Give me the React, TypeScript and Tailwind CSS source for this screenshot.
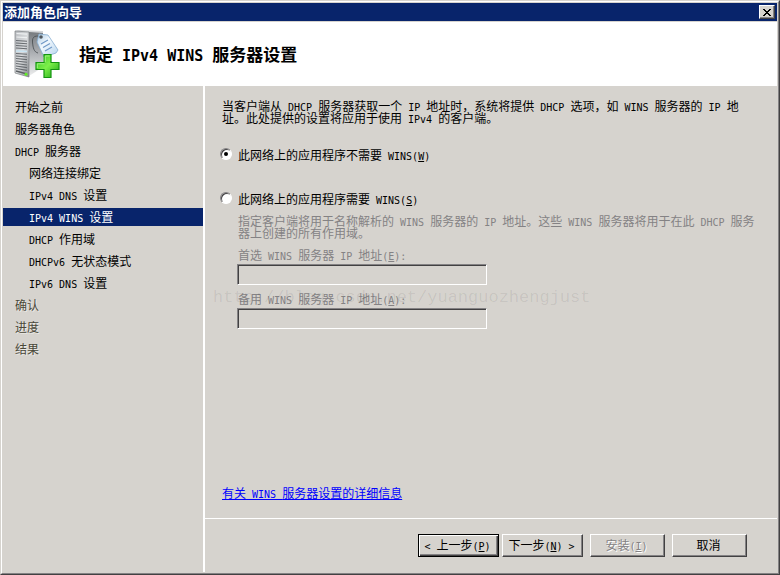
import { useState } from 'react'
import type { ReactNode } from 'react'
import clsx from 'clsx'

interface Step {
  title: string
  sub?: boolean
  disabled?: boolean
}

const STEPS: Step[] = [
  { title: '开始之前' },
  { title: '服务器角色' },
  { title: 'DHCP 服务器' },
  { title: '网络连接绑定', sub: true },
  { title: 'IPv4 DNS 设置', sub: true },
  { title: 'IPv4 WINS 设置', sub: true },
  { title: 'DHCP 作用域', sub: true },
  { title: 'DHCPv6 无状态模式', sub: true },
  { title: 'IPv6 DNS 设置', sub: true },
  { title: '确认', disabled: true },
  { title: '进度', disabled: true },
  { title: '结果', disabled: true },
]

const CURRENT = 5

// Latin runs use a half-width mono face, CJK runs stay full width.
// "&" marks the access key, as in Win32 captions.
function Caption({ text, large }: { text: string; large?: boolean }) {
  const runs = text.match(/[\x20-\x7e]+|[^\x20-\x7e]+/g) ?? []
  return (
    <>
      {runs.map((run, i) => {
        if (!/^[\x20-\x7e]/.test(run)) return run
        const [head, tail] = run.split('&')
        return (
          <span
            key={i}
            className={clsx(
              "font-['DejaVu_Sans_Mono',monospace] leading-[0]",
              large ? 'text-[15px]' : 'text-[10px]'
            )}
          >
            {head}
            {tail && <u className="underline-offset-1">{tail[0]}</u>}
            {tail?.slice(1)}
          </span>
        )
      })}
    </>
  )
}

function ServerIcon() {
  return (
    <svg className="h-[50px] w-[48px] shrink-0" viewBox="0 0 48 50" aria-hidden="true">
      <defs>
        <linearGradient id="front" x1="0" y1="0" x2="1" y2="1">
          <stop offset="0" stopColor="#b9bcc0" />
          <stop offset="0.5" stopColor="#d9dbdd" />
          <stop offset="1" stopColor="#85898d" />
        </linearGradient>
        <linearGradient id="side" x1="0" y1="0" x2="0" y2="1">
          <stop offset="0" stopColor="#74787c" />
          <stop offset="0.5" stopColor="#aeb1b5" />
          <stop offset="1" stopColor="#eceded" />
        </linearGradient>
        <linearGradient id="tag" x1="0" y1="0" x2="1" y2="1">
          <stop offset="0" stopColor="#a9c8e2" />
          <stop offset="0.4" stopColor="#f2f8fd" />
          <stop offset="1" stopColor="#b4d3ee" />
        </linearGradient>
        <linearGradient id="plus" x1="0" y1="0" x2="1" y2="1">
          <stop offset="0" stopColor="#2fbf22" />
          <stop offset="0.5" stopColor="#7df04a" />
          <stop offset="1" stopColor="#18a312" />
        </linearGradient>
      </defs>
      <path d="M15 2 29 3V38L15 47Z" fill="url(#side)" />
      <path d="M1 2 4 1 29 2 29 4 15 3Z" fill="#d4d6d8" />
      <path d="M1 2 15 3V48L1 44Z" fill="url(#front)" stroke="#7b7f83" strokeWidth="0.7" />
      <path d="M2.5 4.5 13 5.2M2.5 8 13 8.7" stroke="#eef0f1" strokeWidth="1.2" />
      <path
        d="M2 11.5 13 12.3M2 14 13 14.8M2 16.5 13 17.3M2 19 13 19.8M2 24.5 13 25.3M2 27 13 28M2 29.5 13 30.6M2 32 13 33.3M2 34.5 13 36M2 37 13 38.6M2 39.5 13 41.4"
        stroke="#686c70"
        strokeWidth="1.1"
      />
      <path d="M2 22 13 22.6" stroke="#c8e4f2" strokeWidth="1.5" />
      <path d="M2 42 13 45" stroke="#5c6064" strokeWidth="1.3" />
      <circle cx="12" cy="45.3" r="1.5" fill="#63ef24" />
      <path d="M28 8C22 6 18 7 18.5 13S20 23 24 24" fill="none" stroke="#4d5256" strokeWidth="0.9" />
      <path d="M25 5 34 6 44 21 42 24 30 28 23 13Z" fill="url(#tag)" stroke="#86add0" strokeWidth="0.8" />
      <circle cx="27" cy="8" r="1.8" fill="#50565c" />
      <path d="M27 15 34 11M29 18.5 36 14.5M31 22 38 18" stroke="#7198c6" strokeWidth="1.2" />
      <path
        d="M30 25.5H37V33.5H45V40.5H37V48.5H30V40.5H22V33.5H30Z"
        fill="url(#plus)"
        stroke="#159411"
        strokeWidth="1.2"
      />
      <path d="M31.3 33V27H35.6M23.3 39V34.8H30.5" fill="none" stroke="#a5f684" strokeWidth="0.9" />
    </svg>
  )
}

interface PushButtonProps {
  text: string
  wide?: boolean
  focused?: boolean
  disabled?: boolean
}

function PushButton({ text, wide, focused, disabled }: PushButtonProps) {
  return (
    <button
      type="button"
      disabled={disabled}
      className={clsx(
        'h-[23px] border pr-0.5 pb-0.5 whitespace-nowrap leading-4',
        wide ? 'w-[81px]' : 'w-[75px]',
        focused
          ? 'border-black shadow-[inset_1px_1px_#fff,inset_-1px_-1px_#424142,inset_-2px_-2px_#848284]'
          : 'border-t-white border-r-[#424142] border-b-[#424142] border-l-white shadow-[inset_-1px_-1px_#848284]',
        disabled && 'text-[#848284] [text-shadow:1px_1px_#fff]'
      )}
    >
      <Caption text={text} />
    </button>
  )
}

interface OptionProps {
  id: string
  checked: boolean
  onChange: () => void
  children: ReactNode
}

function Option({ id, checked, onChange, children }: OptionProps) {
  return (
    <div className="flex h-3.5 items-start gap-1.5">
      <input
        id={id}
        type="radio"
        name="wins"
        checked={checked}
        onChange={onChange}
        className="grid size-3 shrink-0 appearance-none place-items-center rounded-full border border-t-[#848284] border-r-white border-b-white border-l-[#848284] bg-white shadow-[inset_1px_1px_#424142] checked:before:size-1 checked:before:rounded-full checked:before:bg-black"
      />
      <label htmlFor={id} className="leading-3.5">
        {children}
      </label>
    </div>
  )
}

function AddressField({ id, label, disabled }: { id: string; label: string; disabled: boolean }) {
  return (
    <div className="flex flex-col gap-[3px]">
      <label htmlFor={id} className={clsx('pl-px leading-3', disabled && 'text-[#848284]')}>
        <Caption text={label} />
      </label>
      <input
        id={id}
        type="text"
        disabled={disabled}
        className="h-[21px] w-[250px] border border-t-[#848284] border-r-white border-b-white border-l-[#848284] px-1 shadow-[inset_1px_1px_#424142] enabled:bg-white"
      />
    </div>
  )
}

export default function App() {
  const [useWins, setUseWins] = useState(false)

  return (
    <div className="flex min-h-screen flex-col border border-t-[#d6d3ce] border-r-[#424142] border-b-[#424142] border-l-[#d6d3ce] bg-[#d6d3ce] font-['Noto_Sans_CJK_SC',sans-serif] text-[12px] text-black">
      <div className="flex grow flex-col border border-t-white border-r-[#848284] border-b-[#848284] border-l-white p-px">
        {/* 标题栏 */}
        <div className="flex h-[18px] items-center justify-between bg-[#08246b] pr-0.5 pl-px">
          <span className="text-[13px] leading-4 font-bold text-white">添加角色向导</span>
          <button
            type="button"
            aria-label="关闭"
            className="grid h-3.5 w-4 place-items-center border border-t-white border-r-[#424142] border-b-[#424142] border-l-white bg-[#d6d3ce] shadow-[inset_-1px_-1px_#848284]"
          >
            <svg className="h-[7px] w-2" viewBox="0 0 8 7" shapeRendering="crispEdges" aria-hidden="true">
              <path
                d="M0 0h2v1H0zM6 0h2v1H6zM1 1h2v1H1zM5 1h2v1H5zM2 2h4v1H2zM3 3h2v1H3zM2 4h4v1H2zM1 5h2v1H1zM5 5h2v1H5zM0 6h2v1H0zM6 6h2v1H6z"
                fill="#000"
              />
            </svg>
          </button>
        </div>

        <header className="mt-px flex h-16 items-center gap-[17px] bg-white pl-[11px]">
          <ServerIcon />
          <h1 className="text-[17px] leading-6 font-bold">
            <Caption text="指定 IPv4 WINS 服务器设置" large />
          </h1>
        </header>

        <div className="flex grow">
          {/* 步骤列表 */}
          <nav className="w-[202px] shrink-0 border-r-2 border-white pt-3">
            <ul className="flex flex-col gap-1">
              {STEPS.map((step, i) => (
                <li
                  key={step.title}
                  className={clsx(
                    'h-[18px] leading-[18px]',
                    step.sub ? 'pl-[26px]' : 'pl-3',
                    i === CURRENT && 'bg-[#08246b] text-white',
                    step.disabled && 'text-[#4a4839] [text-shadow:1px_1px_#ebe9e4]'
                  )}
                >
                  {step.disabled ? (
                    <span>{step.title}</span>
                  ) : (
                    <a href="#" aria-current={i === CURRENT ? 'step' : undefined}>
                      <Caption text={step.title} />
                    </a>
                  )}
                </li>
              ))}
            </ul>
          </nav>

          <div className="flex min-w-0 grow flex-col">
            <main className="relative flex grow flex-col items-start pt-3.5 pr-5 pb-[19px] pl-[15px]">
              <p className="pr-3 pl-0.5 leading-3">
                <Caption text="当客户端从 DHCP 服务器获取一个 IP 地址时，系统将提供 DHCP 选项，如 WINS 服务器的 IP 地址。此处提供的设置将应用于使用 IPv4 的客户端。" />
              </p>

              <div className="mt-6 flex flex-col gap-[30px]">
                <Option id="no-wins" checked={!useWins} onChange={() => setUseWins(false)}>
                  <Caption text="此网络上的应用程序不需要 WINS(&W)" />
                </Option>
                <Option id="need-wins" checked={useWins} onChange={() => setUseWins(true)}>
                  <Caption text="此网络上的应用程序需要 WINS(&S)" />
                </Option>
              </div>

              <div className="mt-[9px] flex flex-col gap-2 pl-[17px]">
                <p className="pb-0.5 pl-px leading-3 text-[#848284]">
                  <Caption text="指定客户端将用于名称解析的 WINS 服务器的 IP 地址。这些 WINS 服务器将用于在此 DHCP 服务器上创建的所有作用域。" />
                </p>
                <AddressField id="preferred" label="首选 WINS 服务器 IP 地址(&E):" disabled={!useWins} />
                <AddressField id="alternate" label="备用 WINS 服务器 IP 地址(&A):" disabled={!useWins} />
              </div>

              <a href="#" className="mt-auto ml-0.5 leading-3 text-[#0000ff] underline">
                <Caption text="有关 WINS 服务器设置的详细信息" />
              </a>

              <span className="pointer-events-none absolute top-[200px] left-2 font-['Liberation_Mono',monospace] text-[17px] leading-6 text-black/8">
                http://blog.csdn.net/yuanguozhengjust
              </span>
            </main>

            <footer className="flex h-[54px] items-center justify-end border-t border-white pr-[30px]">
              <div className="flex gap-[7px]">
                <div className="flex gap-[3px]">
                  <PushButton text="< 上一步(&P)" wide focused />
                  <PushButton text="下一步(&N) >" wide />
                </div>
                <PushButton text="安装(&I)" disabled />
                <PushButton text="取消" />
              </div>
            </footer>
          </div>
        </div>
      </div>
    </div>
  )
}
